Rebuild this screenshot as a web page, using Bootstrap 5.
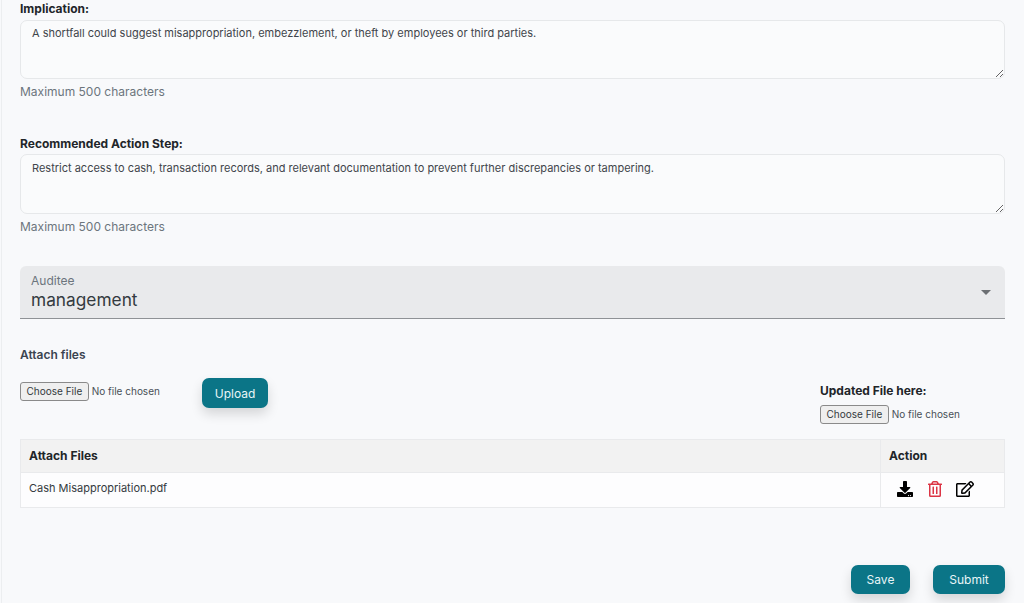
<!DOCTYPE html>
<html lang="en"><head><meta charset="utf-8"><title>Audit finding</title>
<link href="https://cdn.jsdelivr.net/npm/bootstrap@5.3.0/dist/css/bootstrap.min.css" rel="stylesheet">
<style>
html,body{height:603px;overflow:hidden}
body{background:#f8f9fb;font-family:"Inter","Noto Sans",sans-serif;font-size:11px;color:#212529}
.page-wrap{margin-left:1px;border-left:1px solid #eceef0;height:603px;padding:0 19px 0 18px}
.fld-label{font-weight:700;font-size:12px;line-height:16px;color:#212529;display:block;margin:0 0 2px}
.first-label{padding-top:1px;height:20px;margin:0}
.note-area.form-control{height:60px;background:#fafbfc;border:1px solid #e6e8ea;border-radius:7px;font-size:11px;line-height:16px;padding:5px 11px;color:#3f454b;box-shadow:none}
#imp.note-area.form-control{height:59px;padding-top:4px}
.hint{font-size:12px;line-height:16px;color:#6c757d;margin-top:5px}
.gap-a{height:36px}
.aud-box{margin-top:31px;height:53px;background:#e9eaec;border-bottom:1px solid #8f9296;border-radius:6px 6px 0 0;padding:8px 11px 0}
.aud-cap{font-size:12px;line-height:14px;color:#6c757d}
.aud-val{font-size:17.3px;line-height:24px;color:#343a40}
.aud-caret{width:0;height:0;border-left:5px solid transparent;border-right:5px solid transparent;border-top:5px solid #6c6f73;margin:16px 3px 0 0}
.att-title{margin-top:28px;font-weight:600;font-size:12px;line-height:16px;color:#3b4450}
.att-row{height:65px;margin-top:11px}
.file-in{font-family:inherit;font-size:10px;color:#495057;width:150px}
.file-in::file-selector-button{font-family:inherit;font-size:10px;height:19px;padding:0 5.5px;border:1px solid #8a8a8a;border-radius:3px;background:#efefef;color:#343a40;margin-right:3px}
.left-file{margin-top:8px;width:150px}
.teal-btn.btn{background:#0b7587;border:0;color:#e9f5f7;border-radius:7px;font-size:12px;line-height:16px;box-shadow:0 6px 12px rgba(0,0,0,.14)}
.up-btn.btn{width:66px;height:30px;padding:1px 0 0;margin-left:32px;margin-top:4px}
.upd-col{width:185px;padding-top:9px}
.upd-label{font-weight:700;font-size:12px;line-height:16px;margin-bottom:6px;color:#212529}
.file-tbl.table{margin:0;--bs-table-bg:transparent;--bs-table-border-color:#e9eaec;font-size:11px}
.file-tbl th{background:#f2f2f2;font-size:12px;font-weight:700;height:33px;padding:0 8px;vertical-align:middle}
.file-tbl td{background:#fdfdfe;height:35px;padding:7px 8px 0;vertical-align:top;color:#343a40}
.act-col{width:124px}
.act-ico{height:16px;display:block}
.act-set{gap:14.5px;padding-left:8px;margin-top:1px}
.foot-btns{margin-top:57px;gap:23px}
.sv-btn.btn{width:59px;height:29px;padding:0}
.sb-btn.btn{width:72px;height:29px;padding:0}
</style></head><body>
<main class="page-wrap">
<label class="fld-label first-label" for="imp">Implication:</label>
<textarea id="imp" class="form-control note-area">A shortfall could suggest misappropriation, embezzlement, or theft by employees or third parties.</textarea>
<div class="hint">Maximum 500 characters</div>
<div class="gap-a"></div>
<label class="fld-label" for="rec">Recommended Action Step:</label>
<textarea id="rec" class="form-control note-area">Restrict access to cash, transaction records, and relevant documentation to prevent further discrepancies or tampering.</textarea>
<div class="hint">Maximum 500 characters</div>
<div class="aud-box d-flex align-items-start justify-content-between">
  <div><div class="aud-cap">Auditee</div><div class="aud-val">management</div></div>
  <div class="aud-caret"></div>
</div>
<div class="att-title">Attach files</div>
<div class="att-row d-flex justify-content-between">
  <div class="d-flex align-items-start">
    <input type="file" class="file-in left-file" aria-label="Attach file">
    <button class="btn teal-btn up-btn" type="button">Upload</button>
  </div>
  <div class="upd-col">
    <div class="upd-label">Updated File here:</div>
    <input type="file" class="file-in" aria-label="Updated file">
  </div>
</div>
<table class="table table-bordered file-tbl">
<thead><tr><th>Attach Files</th><th class="act-col">Action</th></tr></thead>
<tbody><tr><td>Cash Misappropriation.pdf</td><td>
 <div class="d-flex align-items-center act-set">
 <svg class="act-ico" viewBox="0 0 512 512" fill="#000" aria-label="Download"><path d="M216 0h80c13.3 0 24 10.7 24 24v168h87.7c17.8 0 26.7 21.5 14.1 34.1L269.7 378.3c-7.5 7.5-19.8 7.5-27.3 0L90.1 226.1c-12.6-12.6-3.7-34.1 14.1-34.1H192V24c0-13.3 10.7-24 24-24zm296 376v112c0 13.3-10.7 24-24 24H24c-13.3 0-24-10.7-24-24V376c0-13.3 10.7-24 24-24h146.7l49 49c20.1 20.1 52.5 20.1 72.6 0l49-49H488c13.3 0 24 10.7 24 24zm-124 88c0-11-9-20-20-20s-20 9-20 20 9 20 20 20 20-9 20-20zm64 0c0-11-9-20-20-20s-20 9-20 20 9 20 20 20 20-9 20-20z"/></svg>
 <svg class="act-ico" viewBox="0 0 448 512" fill="#dc3545" aria-label="Delete"><path d="M268 416h24a12 12 0 0 0 12-12V188a12 12 0 0 0-12-12h-24a12 12 0 0 0-12 12v216a12 12 0 0 0 12 12zM432 80h-82.41l-34-56.7A48 48 0 0 0 274.41 0H173.59a48 48 0 0 0-41.16 23.3L98.41 80H16A16 16 0 0 0 0 96v16a16 16 0 0 0 16 16h16v336a48 48 0 0 0 48 48h288a48 48 0 0 0 48-48V128h16a16 16 0 0 0 16-16V96a16 16 0 0 0-16-16zM171.84 50.91A6 6 0 0 1 177 48h94a6 6 0 0 1 5.15 2.91L293.61 80H154.39zM368 464H80V128h288zm-212-48h24a12 12 0 0 0 12-12V188a12 12 0 0 0-12-12h-24a12 12 0 0 0-12 12v216a12 12 0 0 0 12 12z"/></svg>
 <svg class="act-ico" viewBox="0 0 576 512" fill="#000" aria-label="Edit"><path d="M402.3 344.9l32-32c5-5 13.7-1.5 13.7 5.7V464c0 26.5-21.5 48-48 48H48c-26.5 0-48-21.5-48-48V112c0-26.5 21.5-48 48-48h273.5c7.1 0 10.7 8.6 5.7 13.7l-32 32c-1.5 1.5-3.5 2.3-5.7 2.3H48v352h352V350.5c0-2.1.8-4.1 2.3-5.6zm156.6-201.8L296.3 405.7l-90.4 10c-26.2 2.9-48.5-19.2-45.6-45.6l10-90.4L432.9 17.1c22.9-22.9 59.9-22.9 82.7 0l43.2 43.2c22.9 22.9 22.9 60 .1 82.8zM460.1 174L402 115.9 216.2 301.8l-7.3 65.3 65.3-7.3L460.1 174zm64.8-79.7l-43.2-43.2c-4.1-4.1-10.8-4.1-14.8 0L436 82l58.1 58.1 30.9-30.9c4-4.2 4-10.8-.1-14.9z"/></svg>
 </div></td></tr></tbody>
</table>
<div class="foot-btns d-flex justify-content-end">
  <button class="btn teal-btn sv-btn" type="button">Save</button>
  <button class="btn teal-btn sb-btn" type="button">Submit</button>
</div>
</main>
</body></html>
